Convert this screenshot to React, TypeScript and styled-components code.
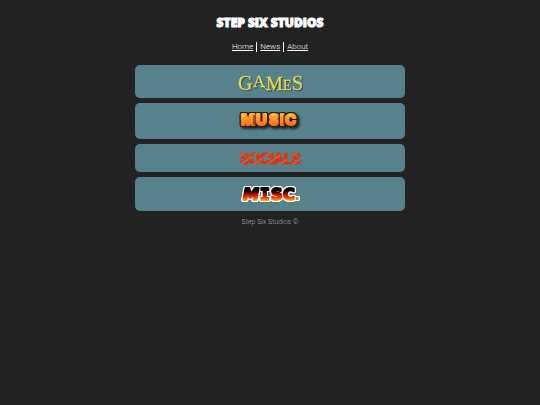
import React from "react";
import styled, { createGlobalStyle } from "styled-components";

const GlobalStyle = createGlobalStyle`
  body {
    margin: 0;
    background: #222222;
    color: #ffffff;
    font-family: "Roboto", "Liberation Sans", sans-serif;
  }
`;

const Page = styled.div`
  display: flex;
  flex-direction: column;
  align-items: center;
  padding-top: 14px;
`;

const Title = styled.h1`
  margin: 0;
  font-family: "Open Sans", sans-serif;
  font-size: 12px;
  font-weight: 800;
  line-height: 18px;
  -webkit-text-stroke: 1px #ffffff;
`;

const Nav = styled.nav`
  display: flex;
  align-items: center;
  gap: 3px;
  margin: 8px 0 12px;
  line-height: 13px;
`;

const NavLink = styled.a`
  color: #ffffff;
  font-size: 8px;
  font-weight: 300;
  text-decoration: underline;
`;

const Divider = styled.span`
  width: 1px;
  height: 10px;
  background: #ffffff;
`;

const Sections = styled.main`
  display: flex;
  flex-direction: column;
  gap: 5px;
  width: 50%;
`;

const SectionLink = styled.a<{ $height: number }>`
  display: flex;
  align-items: center;
  justify-content: center;
  height: ${(p) => p.$height}px;
  border-radius: 5px;
  background: #57828b;
`;

const Logo = styled.svg`
  display: block;
  width: 66px;
  height: 26px;
  overflow: visible;
`;

const GoldLettering = styled.g`
  font-family: "Liberation Serif", serif;
  filter: drop-shadow(1px 1px 0 #34483a);
`;

const BubbleLettering = styled.text`
  font-family: Inter, sans-serif;
  font-size: 15px;
  font-weight: 800;
  stroke-width: 2px;
  stroke-linejoin: round;
  filter: drop-shadow(1px 0 0 #2a1c14) drop-shadow(-1px 0 0 #2a1c14)
    drop-shadow(0 1px 0 #2a1c14) drop-shadow(0 -1px 0 #2a1c14)
    drop-shadow(2px 2px 1px #19292c);
`;

const EmberLettering = styled.text`
  font-family: Inter, sans-serif;
  font-size: 14px;
  font-weight: 500;
  stroke-width: 1px;
  filter: drop-shadow(1px 0 0 #96583b);
`;

const FlameLettering = styled.text`
  font-family: "DejaVu Sans", sans-serif;
  font-size: 16px;
  font-weight: 700;
  stroke-width: 2px;
  stroke-linejoin: round;
  filter: drop-shadow(1px 0 0 #ffffff) drop-shadow(-1px 0 0 #ffffff)
    drop-shadow(0 1px 0 #ffffff) drop-shadow(0 -1px 0 #ffffff);
`;

const Footer = styled.footer`
  margin-top: 6px;
  color: #b0b0b0;
  font-size: 7px;
  font-weight: 300;
  line-height: 11px;
`;

function GamesLogo() {
  return (
    <Logo viewBox="0 0 66 26" role="img" aria-label="Games">
      <GoldLettering fill="#e2d962" stroke="#e2d962" strokeWidth="0.3">
        <text y="21">
          <tspan x="1" fontSize="20">G</tspan>
          <tspan x="16" y="18" fontSize="17">A</tspan>
          <tspan x="29" y="21" fontSize="19">M</tspan>
          <tspan x="46" fontSize="14">E</tspan>
          <tspan x="55" fontSize="20">S</tspan>
        </text>
        <path d="M23 10Q25 19 31 21" fill="none" stroke="#e2d962" strokeWidth="1" />
      </GoldLettering>
    </Logo>
  );
}

function MusicLogo() {
  return (
    <Logo viewBox="0 0 66 26" role="img" aria-label="Music">
      <defs>
        <linearGradient id="orange" gradientUnits="userSpaceOnUse" x1="0" y1="5" x2="0" y2="20">
          <stop offset="0.1" stopColor="#ffac2c" />
          <stop offset="0.5" stopColor="#ff8b27" />
          <stop offset="1" stopColor="#ff5724" />
        </linearGradient>
      </defs>
      <BubbleLettering x="4 19 32 43 48" y="17" fill="url(#orange)" stroke="url(#orange)">
        MUSIC
      </BubbleLettering>
      <path d="M17 7v10M31 7v10M42 7v10M47 7v10" stroke="#3a2014" />
      <path d="M5 8h2M20 8h1M35 7h2M52 7h2" stroke="#ffe4aa" strokeLinecap="round" />
    </Logo>
  );
}

function SocialsLogo() {
  return (
    <Logo viewBox="0 0 66 26" role="img" aria-label="Socials">
      <defs>
        <linearGradient
          id="embers"
          gradientUnits="userSpaceOnUse"
          x1="0"
          y1="0"
          x2="2"
          y2="3"
          spreadMethod="reflect"
        >
          <stop offset="0.2" stopColor="#e9291a" />
          <stop offset="0.7" stopColor="#cf3e1c" />
          <stop offset="1" stopColor="#e87420" />
        </linearGradient>
      </defs>
      <EmberLettering x="33" y="19" textAnchor="middle" fill="url(#embers)" stroke="url(#embers)">
        SOCIALS
      </EmberLettering>
    </Logo>
  );
}

function MiscLogo() {
  return (
    <Logo viewBox="0 0 66 26" role="img" aria-label="Misc.">
      <defs>
        <linearGradient id="flame" gradientUnits="userSpaceOnUse" x1="0" y1="5" x2="0" y2="21">
          <stop offset="0.35" stopColor="#130000" />
          <stop offset="0.5" stopColor="#a90b00" />
          <stop offset="0.7" stopColor="#f03600" />
          <stop offset="1" stopColor="#ffd52d" />
        </linearGradient>
      </defs>
      <FlameLettering y="19" fill="url(#flame)" stroke="url(#flame)">
        <tspan x="6" fontStyle="oblique">M</tspan>
        <tspan x="23" fontFamily="DejaVu Sans Mono, monospace">I</tspan>
        <tspan x="34">S</tspan>
        <tspan x="46">C</tspan>
        <tspan x="57" strokeWidth="0" fill="#a8982b">.</tspan>
      </FlameLettering>
    </Logo>
  );
}

const sections = [
  { id: "games", height: 33, Art: GamesLogo },
  { id: "music", height: 36, Art: MusicLogo },
  { id: "socials", height: 28, Art: SocialsLogo },
  { id: "misc", height: 34, Art: MiscLogo },
];

export default function App() {
  return (
    <>
      <GlobalStyle />
      <Page>
        <Title>STEP SIX STUDIOS</Title>
        <Nav aria-label="Main">
          <NavLink href="#home">Home</NavLink>
          <Divider />
          <NavLink href="#news">News</NavLink>
          <Divider />
          <NavLink href="#about">About</NavLink>
        </Nav>
        <Sections>
          {sections.map(({ id, height, Art }) => (
            <SectionLink key={id} href={`#${id}`} $height={height}>
              <Art />
            </SectionLink>
          ))}
        </Sections>
        <Footer>Step Six Studios ©</Footer>
      </Page>
    </>
  );
}
